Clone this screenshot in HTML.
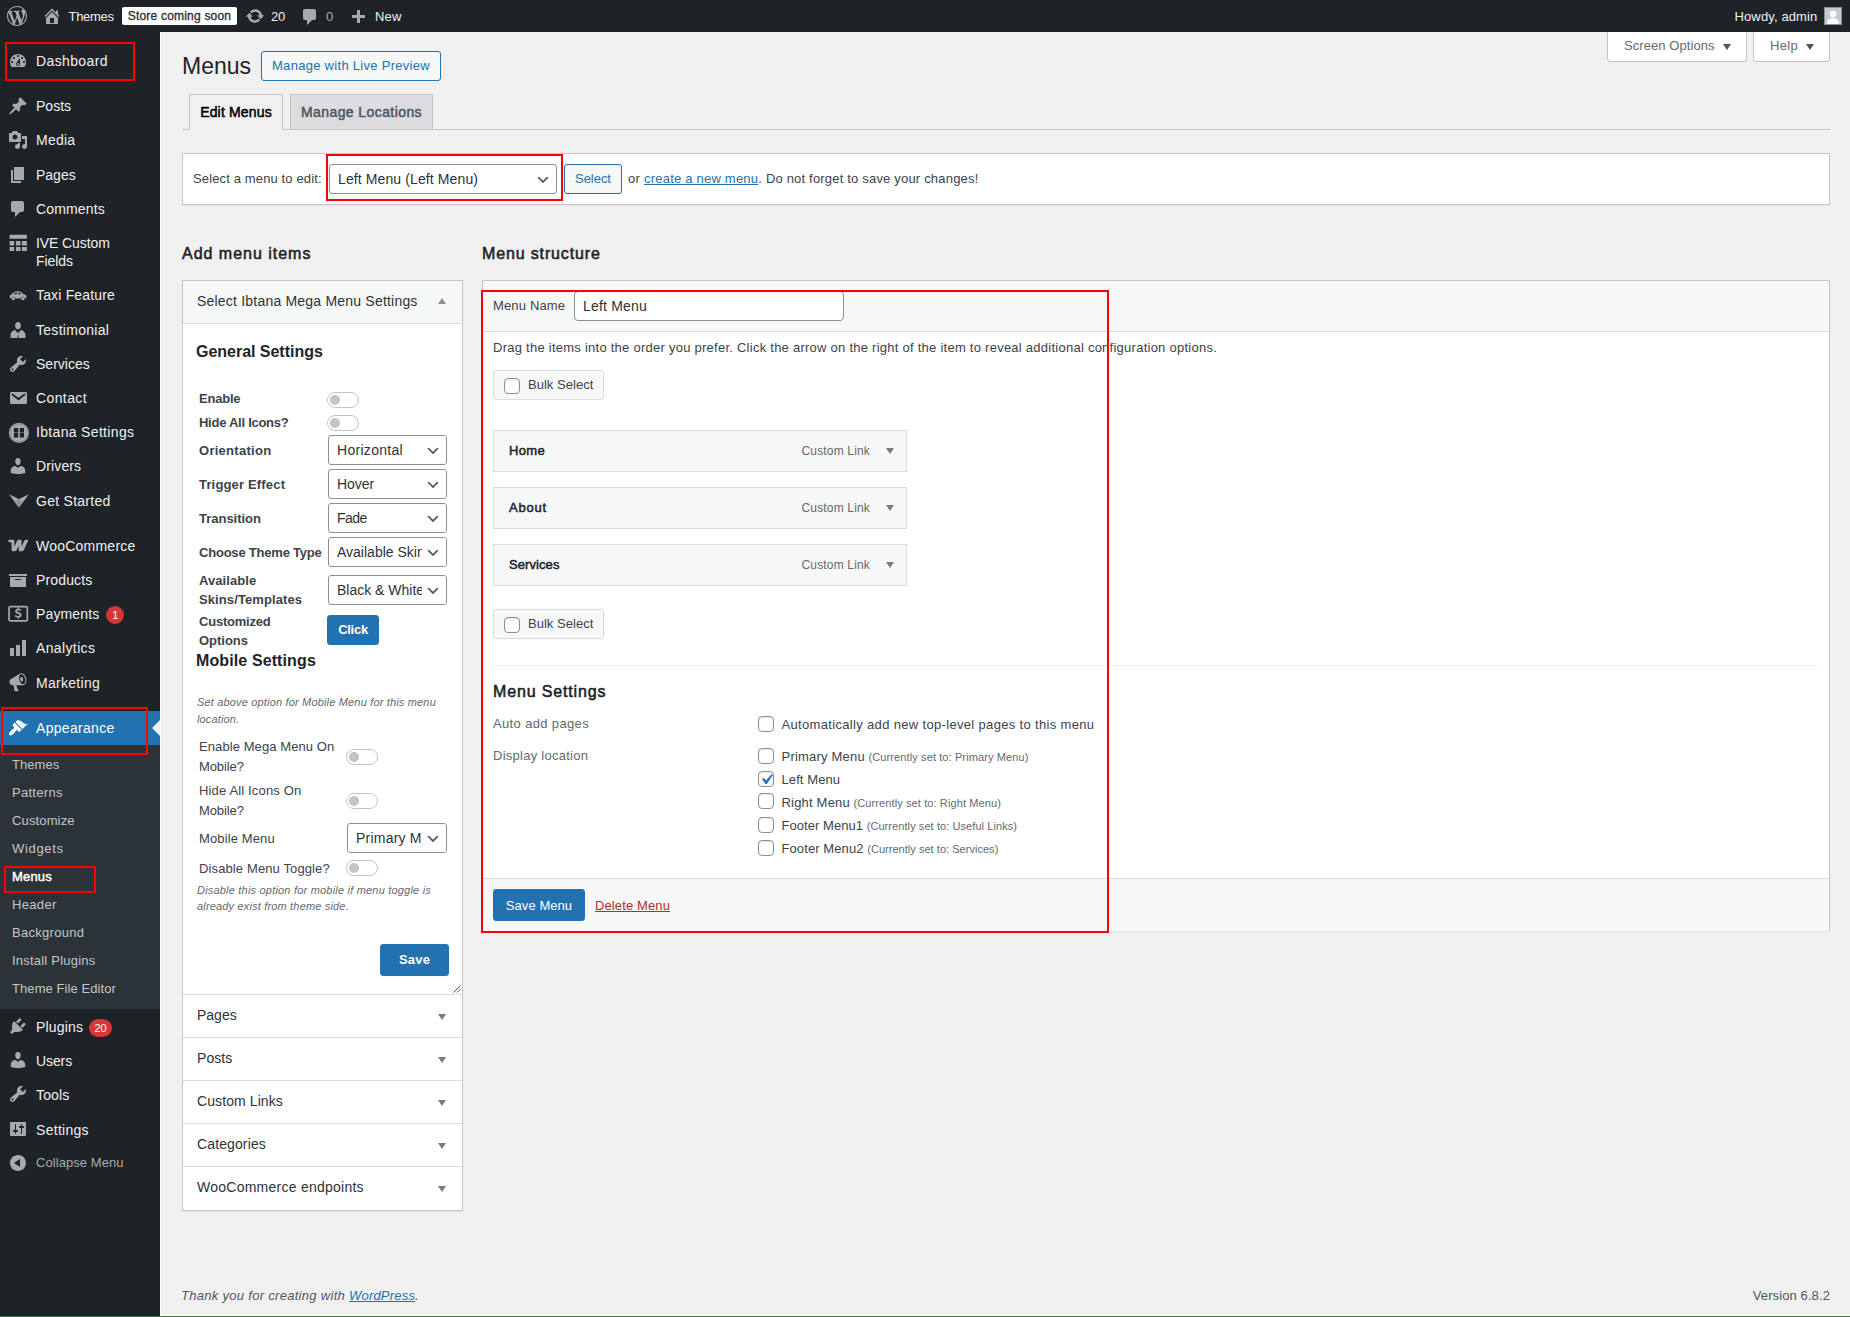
<!DOCTYPE html>
<html lang="en">
<head>
<meta charset="utf-8">
<title>Menus ‹ Themes — WordPress</title>
<style>
*{box-sizing:border-box}
html,body{margin:0;padding:0}
body{width:1850px;height:1317px;overflow:hidden;position:relative;background:#f0f0f1;font-family:"Liberation Sans",sans-serif;font-size:13px;line-height:1.4;color:#3c434a}
a{color:#2271b1;text-decoration:underline}
ul{list-style:none;margin:0;padding:0}
svg{display:block;overflow:visible}
h1,h2,h3,p{margin:0}
/* ---------- admin bar ---------- */
#wpadminbar{position:absolute;left:0;top:0;width:1850px;height:32px;background:#1d2327;color:#f0f0f1;font-size:13px;line-height:32px;z-index:10}
#wpadminbar .ab{position:absolute;top:0;height:32px;line-height:34px;white-space:nowrap}
#wpadminbar .abi{position:absolute;width:20px;height:20px}
#wpadminbar .abi svg{fill:#a7aaad}
#wpadminbar .dim{color:#a7aaad}
.soon{position:absolute;left:122px;top:7px;width:115px;height:18px;background:#fff;border-radius:2px;color:#2c3338;font-size:12px;line-height:18px;text-align:center;-webkit-text-stroke:.35px #2c3338}
.avatar{position:absolute;left:1824px;top:7px;width:18px;height:18px;border:1px solid #8c8f94;background:#c8c9cc;overflow:hidden}
.avatar svg{fill:#fff}
/* ---------- side menu ---------- */
#adminmenuback{position:absolute;left:0;top:32px;width:160px;height:1285px;background:#1d2327}
#adminmenu{position:absolute;left:0;top:44px;width:160px;color:#f0f0f1;font-size:14px;line-height:18.2px}
#adminmenu li.top{position:relative;min-height:34.2px}
#adminmenu li.top>.ic{position:absolute;left:8px;top:7px;width:20px;height:20px}
#adminmenu li.top>.ic svg{fill:#a7aaad}
#adminmenu li.top>.nm{display:block;padding:8px 8px 8px 36px}
#adminmenu li.sep{height:11px}
#adminmenu li.cur{background:#2271b1;color:#fff}
#adminmenu li.cur>.ic svg{fill:#fff}
#adminmenu li.cur:after{content:"";position:absolute;right:0;top:9px;border:8px solid transparent;border-right-color:#f0f0f1}
#adminmenu .sub{background:#2c3338;padding:6px 0;font-size:13px;line-height:18px;color:#c3c4c7}
#adminmenu .sub li{padding:5px 12px;height:28px}
#adminmenu .sub li.on{color:#fff;-webkit-text-stroke:.45px}
.badge{display:inline-block;vertical-align:top;margin:1px 0 -1px 3px;padding:0 5px;min-width:18px;height:18px;border-radius:9px;background:#d63638;color:#fff;font-size:11px;line-height:18px;text-align:center}
#collapse{color:#a7aaad;font-size:13px}
.red{position:absolute;border:2px solid #f00;z-index:20;pointer-events:none}
/* ---------- content ---------- */
.abs{position:absolute}
#screen-meta-links .btn{position:absolute;top:32px;height:30px;background:#fff;border:1px solid #c3c4c7;border-top:none;border-radius:0 0 4px 4px;color:#646970;font-size:13px;line-height:28px;padding-left:16px;white-space:nowrap}
#screen-meta-links .btn i{position:absolute;top:12px;width:0;height:0;border:4px solid transparent;border-top:6px solid #50575e;border-bottom:none}
h1.ttl{position:absolute;left:182px;top:51px;font-size:23px;font-weight:400;line-height:30px;color:#1d2327}
.pta{text-decoration:none;position:absolute;left:261px;top:51px;width:180px;height:30px;border:1px solid #2271b1;border-radius:3px;background:#f6f7f7;color:#2271b1;font-size:13px;line-height:28px;text-align:center;white-space:nowrap}
.tabs{position:absolute;left:182px;top:94px;width:1648px;height:36px;border-bottom:1px solid #c3c4c7}
.tab{position:absolute;top:0;height:35px;border:1px solid #c3c4c7;border-bottom:none;background:#dcdcde;color:#50575e;font-size:14px;-webkit-text-stroke:.5px;line-height:24px;padding:5px 0;text-align:center;white-space:nowrap}
.tab.act{background:#f0f0f1;color:#000;height:36px}
.manage{position:absolute;left:182px;top:153px;width:1648px;height:52px;background:#fff;border:1px solid #c3c4c7;box-shadow:0 1px 1px rgba(0,0,0,.04)}
.manage>span{position:absolute;top:10px;line-height:30px;white-space:nowrap;font-size:13px}
.sel{position:absolute;height:30px;border:1px solid #8c8f94;border-radius:3px;background:#fff;color:#2c3338;font-size:14px;line-height:28px;padding-left:8px;white-space:nowrap;overflow:hidden}
.sel svg{position:absolute;right:5px;top:7px;fill:#555}
.sel b{position:absolute;right:0;top:0;width:24px;height:28px;background:#fff}
.button{position:absolute;height:30px;border:1px solid #2271b1;border-radius:3px;background:#f6f7f7;color:#2271b1;font-size:13px;line-height:28px;text-align:center;white-space:nowrap}
.button.pri{background:#2271b1;color:#fff}
h2.col{position:absolute;top:241px;font-size:16px;font-weight:normal;-webkit-text-stroke:.55px;line-height:26px;color:#1d2327;white-space:nowrap}
/* left accordion */
#side{position:absolute;left:182px;top:280px;width:281px;height:931px;background:#fff;border:1px solid #c3c4c7;box-shadow:0 1px 1px rgba(0,0,0,.04)}
#side .hd{position:absolute;left:0;width:279px;height:43px;border-bottom:1px solid #dcdcde;font-size:14px;line-height:41px;padding-left:14px;color:#2c3338;white-space:nowrap}
#side .hd i{position:absolute;right:16px;top:19px;width:0;height:0;border:4px solid transparent;border-top:6px solid #787c82;border-bottom:none}
#side .hd.open{background:#f6f7f7}
#side .hd.open i{border-top:none;border-bottom:6px solid #8c8f94;top:17px}
#side h3{position:absolute;left:13px;font-size:16px;font-weight:bold;line-height:22px;color:#1d2327;white-space:nowrap}
#side .lb{position:absolute;left:16px;font-size:13px;font-weight:bold;line-height:19px;color:#3c434a;white-space:nowrap}
#side .lr{position:absolute;left:16px;font-size:13px;line-height:19.6px;color:#3c434a;white-space:nowrap}
#side .nt{position:absolute;left:14px;font-size:11px;font-style:italic;line-height:17px;color:#646970;white-space:nowrap}
.tg{position:absolute;width:32px;height:16px;border:1px solid #c3c4c7;border-radius:8px;background:#fff}
.tg:after{content:"";position:absolute;left:2px;top:2px;width:10px;height:10px;border-radius:50%;background:#c3c4c7}
/* right panel */
#mm{position:absolute;left:482px;top:280px;width:1348px;height:652px;background:#fff;border:1px solid #c3c4c7;border-bottom-color:#e5e6e7}
#mm .hdr{position:absolute;left:0;top:0;width:1346px;height:51px;background:#f6f7f7;border-bottom:1px solid #dcdcde}
#mm .ftr{position:absolute;left:0;top:597px;width:1346px;height:53px;background:#f6f7f7;border-top:1px solid #dcdcde}
#mm .t{position:absolute;white-space:nowrap}
.inp{position:absolute;height:30px;border:1px solid #8c8f94;border-radius:4px;background:#fff;color:#2c3338;font-size:14px;line-height:28px;padding-left:8px}
.bulk{position:absolute;left:10px;width:111px;height:30px;border:1px solid #dcdcde;border-radius:3px;background:#f6f7f7;font-size:13px;line-height:28px;padding-left:34px;color:#3c434a;white-space:nowrap}
.cb{position:absolute;width:16px;height:16px;border:1px solid #8c8f94;border-radius:4px;background:#fff;box-shadow:inset 0 1px 2px rgba(0,0,0,.1)}
.cb svg{position:absolute;left:-3px;top:-3px;fill:#2e74b5}
.mi{position:absolute;left:10px;width:414px;height:42px;border:1px solid #dcdcde;background:#f6f7f7}
.mi b{position:absolute;left:15px;top:0;line-height:40px;font-size:13px;font-weight:normal;-webkit-text-stroke:.5px;color:#1d2327}
.mi>span{position:absolute;right:36px;top:0;line-height:40px;font-size:12px;color:#646970}
.mi i{position:absolute;right:12px;top:17px;width:0;height:0;border:4px solid transparent;border-top:6px solid #787c82;border-bottom:none}
.sm{font-size:11px;color:#646970}
#wpfooter{position:absolute;left:180px;top:1286px;width:1650px;height:20px;color:#50575e;font-size:13px;line-height:20px}
#greenline{position:absolute;left:0;top:1316px;width:1850px;height:1px;background:#387a45;z-index:30}
#wline{position:absolute;left:160px;top:1315px;width:1690px;height:1px;background:#fbfbfb;z-index:29}
#vline{position:absolute;left:160px;top:32px;width:1px;height:1284px;background:#fafafa;z-index:5}
</style>
</head>
<body>
<div id="wpadminbar">
  <div class="abi" style="left:7px;top:6px"><svg viewBox="0 0 20 20" width="20" height="20"><path d="M20 10c0-5.51-4.49-10-10-10C4.48 0 0 4.49 0 10c0 5.52 4.48 10 10 10 5.51 0 10-4.48 10-10zM7.78 15.37L4.37 6.22c.55-.02 1.17-.08 1.17-.08.5-.06.44-1.13-.06-1.11 0 0-1.45.11-2.37.11-.18 0-.37 0-.58-.01C4.12 2.69 6.87 1.11 10 1.11c2.33 0 4.45.87 6.05 2.34-.68-.11-1.65.39-1.65 1.58 0 .74.45 1.36.9 2.1.35.61.55 1.36.55 2.46 0 1.49-1.4 5-1.4 5l-3.03-8.37c.54-.02.82-.17.82-.17.5-.05.44-1.25-.06-1.22 0 0-1.44.12-2.38.12-.87 0-2.33-.12-2.33-.12-.5-.03-.56 1.2-.06 1.22l.92.08 1.26 3.41zM17.41 10c.24-.64.74-1.87.43-4.25.7 1.29 1.05 2.71 1.05 4.25 0 3.29-1.73 6.24-4.4 7.78.97-2.59 1.94-5.2 2.92-7.78zM6.1 18.09C3.12 16.65 1.11 13.53 1.11 10c0-1.3.23-2.48.72-3.59C3.25 10.3 4.67 14.2 6.1 18.09zm4.03-6.63l2.58 6.98c-.86.29-1.76.45-2.71.45-.79 0-1.57-.11-2.29-.33.81-2.38 1.62-4.74 2.42-7.1z"/></svg></div>
  <div class="abi" style="left:42px;top:6px"><svg viewBox="0 0 20 20" width="20" height="20"><path d="M16 8.5l1.53 1.53-1.06 1.06L10 4.62l-6.47 6.47-1.06-1.06L10 2.5l4 4v-2h2v4zm-6-2.46l6 5.99V18H4v-5.97zM12 17v-5H8v5h4z"/></svg></div>
  <span class="ab" id="ab-site" style="left:68.500px"><span id="t1" style="letter-spacing:-0.313px">Themes</span></span>
  <div class="soon"><span id="t2" style="letter-spacing:0.202px">Store coming soon</span></div>
  <div class="abi" style="left:245px;top:6px"><svg viewBox="0 0 20 20" width="20" height="20"><path d="M10.2 3.28c3.53 0 6.43 2.61 6.92 6h2.08l-3.5 4-3.5-4h2.32c-.45-1.97-2.21-3.45-4.32-3.45-1.45 0-2.73.71-3.54 1.78L4.95 5.66C6.23 4.2 8.11 3.28 10.2 3.28zm-.4 13.44c-3.52 0-6.43-2.61-6.92-6H.8l3.5-4c1.17 1.33 2.33 2.67 3.5 4H5.48c.45 1.97 2.21 3.45 4.32 3.45 1.45 0 2.73-.71 3.54-1.78l1.71 1.95c-1.28 1.46-3.15 2.38-5.25 2.38z"/></svg></div>
  <span class="ab" id="ab-upd" style="left:271px"><span id="t3" style="letter-spacing:-0.262px">20</span></span>
  <div class="abi" style="left:299.500px;top:7px"><svg viewBox="0 0 20 20" width="20" height="20"><path d="M5 2h9c1.1 0 2 .9 2 2v7c0 1.1-.9 2-2 2h-2l-5 5v-5H5c-1.1 0-2-.9-2-2V4c0-1.1.9-2 2-2z"/></svg></div>
  <span class="ab dim" id="ab-com" style="left:326px">0</span>
  <div class="abi" style="left:348px;top:8px"><svg viewBox="0 0 20 20" width="20" height="20"><path d="M17 7v3h-5v5H9v-5H4V7h5V2h3v5h5z"/></svg></div>
  <span class="ab" id="ab-new" style="left:375px"><span id="t4" style="letter-spacing:0.194px">New</span></span>
  <span class="ab" id="ab-howdy" style="left:1734.500px"><span id="t5" style="letter-spacing:0.126px">Howdy, admin</span></span>
  <div class="avatar"><svg viewBox="0 0 16 16" width="16" height="16"><circle cx="8" cy="6" r="3.2"/><path d="M2 16c0-4 2.500-6 6-6s6 2 6 6z"/></svg></div>
</div>
<div id="adminmenuback"></div>
<ul id="adminmenu">
<li class="top"><span class="ic i-dashboard"><svg viewBox="0 0 20 20" width="20" height="20"><path d="M3.76 16h12.48c1.1-1.37 1.76-3.11 1.76-5 0-4.42-3.58-8-8-8s-8 3.58-8 8c0 1.89.66 3.63 1.76 5zM10 4c.55 0 1 .45 1 1s-.45 1-1 1-1-.45-1-1 .45-1 1-1zM6 6c.55 0 1 .45 1 1s-.45 1-1 1-1-.45-1-1 .45-1 1-1zm8 0c.55 0 1 .45 1 1s-.45 1-1 1-1-.45-1-1 .45-1 1-1zm-5.37 5.55L12 7v6c0 1.1-.9 2-2 2s-2-.9-2-2c0-.57.24-1.08.63-1.45zM4 10c.55 0 1 .45 1 1s-.45 1-1 1-1-.45-1-1 .45-1 1-1zm12 0c.55 0 1 .45 1 1s-.45 1-1 1-1-.45-1-1 .45-1 1-1zm-5 3c0-.55-.45-1-1-1s-1 .45-1 1 .45 1 1 1 1-.45 1-1z"/></svg></span><span class="nm"><span id="t6" style="letter-spacing:0.375px">Dashboard</span></span></li>
<li class="sep"></li>
<li class="top"><span class="ic i-pin"><svg viewBox="0 0 20 20" width="20" height="20"><path d="M10.44 3.02l1.82-1.82 6.36 6.35-1.83 1.82c-1.05-.68-2.48-.57-3.41.36l-.75.75c-.92.93-1.04 2.35-.35 3.41l-1.83 1.82-2.41-2.41-2.8 2.79c-.42.42-3.38 2.71-3.8 2.29s1.86-3.39 2.28-3.81l2.79-2.79L4.1 9.36l1.83-1.82c1.05.69 2.48.57 3.4-.36l.75-.75c.93-.92 1.05-2.35.36-3.41z"/></svg></span><span class="nm"><span id="t7" style="letter-spacing:0.019px">Posts</span></span></li>
<li class="top"><span class="ic i-media"><svg viewBox="0 0 20 20" width="20" height="20"><path d="M13 11V4c0-.55-.45-1-1-1h-1.67L9 1H5L3.67 3H2c-.55 0-1 .45-1 1v7c0 .55.45 1 1 1h10c.55 0 1-.45 1-1zM7 4.5c1.38 0 2.5 1.12 2.5 2.5S8.38 9.500 7 9.500 4.500 8.380 4.500 7 5.620 4.500 7 4.500zM14 6h5v10.500c0 1.380-1.120 2.500-2.500 2.500S14 17.880 14 16.500s1.120-2.500 2.500-2.500c.170 0 .340.020.500.050V9h-3V6zm-4 8.050V13h2v3.500c0 1.380-1.120 2.500-2.500 2.500S7 17.880 7 16.500 8.120 14 9.500 14c.170 0 .340.020.500.050z"/></svg></span><span class="nm"><span id="t8" style="letter-spacing:0.242px">Media</span></span></li>
<li class="top"><span class="ic i-page"><svg viewBox="0 0 20 20" width="20" height="20"><path d="M6 15V2h10v13H6zm-1 1h8v2H3V5h2v11z"/></svg></span><span class="nm"><span id="t9" style="letter-spacing:-0.002px">Pages</span></span></li>
<li class="top"><span class="ic i-comments"><svg viewBox="0 0 20 20" width="20" height="20"><path d="M5 2h9c1.1 0 2 .9 2 2v7c0 1.1-.9 2-2 2h-2l-5 5v-5H5c-1.1 0-2-.9-2-2V4c0-1.1.9-2 2-2z"/></svg></span><span class="nm"><span id="t10" style="letter-spacing:0.158px">Comments</span></span></li>
<li class="top"><span class="ic i-table"><svg viewBox="0 0 20 20" width="20" height="20"><g transform="translate(0,-1)"><path d="M1.600 2.800h17.300v3.900H1.600zM1.600 8.900h4.500v4.600H1.600zM7.900 8.900h4.600v4.600H7.900zM13.900 8.900h5v4.600h-5zM1.600 14.900h4.500v4.100H1.600zM7.900 14.900h4.600v4.100H7.900zM13.900 14.900h5v4.100h-5z"/></g></svg></span><span class="nm"><span id="t11" style="letter-spacing:-0.089px">IVE Custom</span><br><span id="t12" style="letter-spacing:-0.091px">Fields</span></span></li>
<li class="top"><span class="ic i-car"><svg viewBox="0 0 20 20" width="20" height="20"><g transform="translate(0,1.300) scale(1,.88)"><path d="M3.600 9.400C4.600 7.000 6.700 5.600 9.600 5.600c2.700 0 4.600 1.200 5.800 3.300 1.900.3 3.000 1.300 3.000 2.800v1.500c0 .4-.3.700-.7.700h-.5a2.400 2.400 0 0 0-4.700 0H7.700a2.400 2.400 0 0 0-4.700 0h-.500c-.400 0-.700-.300-.700-.700v-2.100c0-.900.700-1.500 1.800-1.700zm2.000-.300h3.300V7.000C7.500 7.100 6.300 7.800 5.600 9.100zm4.500 0h3.500c-.7-1.200-1.900-2.000-3.500-2.100zM5.350 12.400a1.700 1.700 0 1 0 0 3.400 1.700 1.700 0 0 0 0-3.400zm9.500 0a1.700 1.700 0 1 0 0 3.400 1.700 1.700 0 0 0 0-3.400z"/></g></svg></span><span class="nm"><span id="t13" style="letter-spacing:0.169px">Taxi Feature</span></span></li>
<li class="top"><span class="ic i-person"><svg viewBox="0 0 20 20" width="20" height="20"><g transform="translate(0,-1.400)"><path d="M10 3.400c1.700 0 2.900 1.500 2.900 3.500S11.700 10.700 10 10.700 7.100 8.900 7.100 6.900 8.300 3.400 10 3.400zM7.200 11.500l2.300 2.900.5-1.500.5 1.500 2.300-2.900c2.700.4 4.700 2.400 4.700 5.000v2.900H10.600l-.6-4.000-.6 4.000H2.500v-2.900c0-2.600 2.000-4.600 4.700-5.000z"/></g></svg></span><span class="nm"><span id="t14" style="letter-spacing:0.287px">Testimonial</span></span></li>
<li class="top"><span class="ic i-tools"><svg viewBox="0 0 20 20" width="20" height="20"><path d="M16.680 9.770c-1.340 1.340-3.300 1.670-4.950.990l-5.410 6.520c-.990.990-2.590.990-3.580 0s-.990-2.590 0-3.570l6.520-5.420c-.680-1.650-.350-3.610.990-4.950 1.280-1.280 3.120-1.620 4.720-1.060l-2.890 2.890 2.820 2.820 2.860-2.870c.530 1.580.180 3.390-1.080 4.650zM3.810 16.210c.400.390 1.040.390 1.430 0 .400-.400.400-1.040 0-1.430-.390-.400-1.030-.400-1.430 0-.390.390-.390 1.030 0 1.430z"/></svg></span><span class="nm"><span id="t15" style="letter-spacing:0.016px">Services</span></span></li>
<li class="top"><span class="ic i-email"><svg viewBox="0 0 20 20" width="20" height="20"><path d="M3.870 4h13.250C18.370 4 19 4.590 19 5.790v8.420c0 1.190-.630 1.790-1.880 1.790H3.870c-1.250 0-1.880-.600-1.880-1.790V5.790c0-1.200.630-1.790 1.880-1.790zm6.620 8.600l6.740-5.530c.240-.200.430-.660.130-1.070-.290-.410-.820-.420-1.170-.170l-5.700 3.860L4.800 5.830c-.350-.250-.880-.240-1.170.170-.300.410-.110.870.130 1.070z"/></svg></span><span class="nm"><span id="t16" style="letter-spacing:0.391px">Contact</span></span></li>
<li class="top"><span class="ic i-ibtana"><svg viewBox="0 0 22 20" width="22" height="20"><circle cx="10.950" cy="10.800" r="10.100"/><circle cx="10.950" cy="10.800" r="8.900" fill="none" stroke="#1d2327" stroke-width=".5" opacity=".45"/><path d="M5.900 6.100h4.300v4.400H5.900zM11.800 6.100h4.200v4.400h-4.200zM5.900 11.100h4.300v4.400H5.900zM11.800 11.100h4.200v4.400h-4.200z" fill="#1d2327"/></svg></span><span class="nm"><span id="t17" style="letter-spacing:0.328px">Ibtana Settings</span></span></li>
<li class="top"><span class="ic i-users"><svg viewBox="0 0 20 20" width="20" height="20"><path d="M10 9.250c-2.270 0-2.730-3.440-2.730-3.440C7 4.020 7.820 2 9.970 2c2.160 0 2.980 2.020 2.710 3.810 0 0-.410 3.440-2.680 3.440zm0 2.570L12.720 10c2.390 0 4.520 2.330 4.520 4.530v2.490s-3.650 1.130-7.240 1.130c-3.650 0-7.240-1.130-7.240-1.130v-2.490c0-2.250 1.940-4.480 4.470-4.480z"/></svg></span><span class="nm"><span id="t18" style="letter-spacing:0.127px">Drivers</span></span></li>
<li class="top"><span class="ic i-vee"><svg viewBox="0 0 22 20" width="22" height="20"><path d="M1.100 3.300L10.800 7.900 21 3.300 10.800 16.700z"/><path d="M10.800 7.900L8.200 11.400 10.800 16.700 13.400 11.400z" fill="#1d2327" opacity=".16"/><path d="M10.800 7.900v8.800M10.800 7.900L7 11M10.800 7.900l3.800 3.100" stroke="#1d2327" stroke-width=".4" opacity=".3" fill="none"/></svg></span><span class="nm"><span id="t19" style="letter-spacing:0.27px">Get Started</span></span></li>
<li class="sep"></li>
<li class="top"><span class="ic i-woo"><svg viewBox="0 0 20 20" width="20" height="20"><path d="M0.200 4.900c0-.7.500-1.200 1.200-1.200h3.300c1.100 0 1.700.5 1.700 1.500v5.500l2.700-6.000c.3-.7.800-1.000 1.500-1.000h1.600c.9 0 1.400.5 1.400 1.400v5.600l2.700-6.100c.3-.6.800-.9 1.400-.9h1.500c.9 0 1.200.6.800 1.400l-4.200 8.900c-.4.800-1.000 1.200-1.900 1.200h-1.700c-1.000 0-1.500-.5-1.500-1.500V9.800l-2.000 4.200c-.4.800-1.000 1.200-1.900 1.200H5.100c-1.000 0-1.500-.5-1.500-1.500V7.300c0-.7-.3-1.000-1.000-1.000H1.400c-.7 0-1.200-.5-1.200-1.200z"/></svg></span><span class="nm"><span id="t20" style="letter-spacing:0.23px">WooCommerce</span></span></li>
<li class="top"><span class="ic i-archive"><svg viewBox="0 0 20 20" width="20" height="20"><path d="M19 4v2H1V4h18zM2 7h16v10H2V7zm11 3V9H7v1h6z"/></svg></span><span class="nm"><span id="t21" style="letter-spacing:0.15px">Products</span></span></li>
<li class="top"><span class="ic i-pay"><svg viewBox="0 0 20 20" width="20" height="20"><path fill-rule="evenodd" d="M2.300 1.700h15.800c1.200 0 2.100.9 2.100 2.100v11.800c0 1.200-.9 2.100-2.100 2.100H2.300c-1.200 0-2.100-.9-2.100-2.100V3.800c0-1.200.9-2.100 2.100-2.100zm-.4 1.700v12.600h16.600V3.400H1.900z"/><g transform="translate(-1.600,-1.700) scale(1.150)"><path d="M9.700 4.600h1.200v1.000c.9.100 1.600.4 2.100.8l-.8 1.200c-.5-.4-1.200-.6-1.800-.6-.7 0-1.000.3-1.000.7 0 .4.300.6 1.400.9 1.600.4 2.500 1.000 2.500 2.400 0 1.200-.8 2.100-2.400 2.300v1.100H9.700v-1.100c-1.000-.1-1.900-.5-2.500-1.100l.9-1.200c.6.600 1.400.9 2.200.9.800 0 1.200-.3 1.200-.8 0-.4-.3-.7-1.400-.9-1.600-.4-2.500-1.000-2.500-2.400 0-1.100.8-2.000 2.100-2.200V4.600z"/></g></svg></span><span class="nm"><span id="t22" style="letter-spacing:0.135px">Payments</span> <span class="badge">1</span></span></li>
<li class="top"><span class="ic i-chart"><svg viewBox="0 0 20 20" width="20" height="20"><path d="M18 18V2h-4v16h4zm-6 0V7H8v11h4zm-6 0v-8H2v8h4z"/></svg></span><span class="nm"><span id="t23" style="letter-spacing:0.37px">Analytics</span></span></li>
<li class="top"><span class="ic i-megaphone"><svg viewBox="0 0 20 20" width="20" height="20"><g transform="translate(0,-.8)"><path d="M18.150 5.940c.460 1.620.380 3.220-.020 4.480-.420 1.280-1.260 2.180-2.300 2.480-.160.060-.260.060-.400.060-.060.020-.120.020-.180.020-.060.020-.140.020-.220.020h-6.800l2.220 5.500c.020.140-.060.260-.140.340-.080.100-.240.160-.340.160H6.950c-.100 0-.260-.060-.340-.160-.080-.080-.160-.200-.140-.340l-1-5.500H4.250l-.020-.020c-.500.060-1.080-.180-1.540-.620s-.880-1.080-1.060-1.880c-.240-.800-.200-1.560-.020-2.200.180-.620.580-1.080 1.060-1.300l.020-.020 9-5.400c.100-.060.180-.100.240-.160.060-.040.140-.080.240-.120.160-.080.280-.120.500-.180 1.040-.300 2.240.100 3.220.980s1.840 2.240 2.260 3.860zm-2.580 5.980h-.020c.400-.100.740-.340 1.040-.700.580-.700.860-1.760.860-3.040 0-.640-.100-1.300-.280-1.980-.340-1.360-1.020-2.500-1.780-3.240s-1.680-1.100-2.460-.880c-.820.220-1.400.960-1.700 2-.320 1.040-.280 2.360.060 3.720.380 1.360 1 2.500 1.800 3.240.780.740 1.620 1.100 2.480.880zm-2.540-7.080c.220-.040.420-.020.620.040.380.160.760.480 1.020 1s.420 1.200.420 1.780c0 .300-.040.560-.120.800-.180.480-.440.840-.860.940-.340.100-.800-.060-1.140-.400s-.640-.860-.780-1.500c-.180-.620-.120-1.240.020-1.720s.480-.840.820-.940z"/></g></svg></span><span class="nm"><span id="t24" style="letter-spacing:0.291px">Marketing</span></span></li>
<li class="sep"></li>
<li class="top cur"><span class="ic i-appearance"><svg viewBox="0 0 20 20" width="20" height="20"><path d="M14.480 11.060L7.410 3.990l1.500-1.500c.5-.56 2.300-.47 3.510.32 1.210.8 1.430 1.280 2.910 2.100 1.180.64 2.450 1.260 4.450.85zm-.71.71L6.700 4.700 4.930 6.470c-.39.39-.39 1.020 0 1.410l1.060 1.060c.39.39.39 1.030 0 1.420-.6.600-1.430 1.110-2.210 1.690-.35.260-.7.530-1.010.84C1.430 14.230.4 16.080 1.400 17.070c.99 1 2.840-.03 4.180-1.360.31-.31.580-.66.850-1.020.57-.78 1.080-1.610 1.690-2.210.39-.39 1.020-.39 1.410 0l1.060 1.060c.39.39 1.020.39 1.410 0z"/></svg></span><span class="nm"><span id="t25" style="letter-spacing:0.311px">Appearance</span></span></li>
<li class="subw"><ul class="sub"><li><span id="t26" style="letter-spacing:0.065px">Themes</span></li><li><span id="t27" style="letter-spacing:0.282px">Patterns</span></li><li><span id="t28" style="letter-spacing:0.136px">Customize</span></li><li><span id="t29" style="letter-spacing:0.672px">Widgets</span></li><li class="on"><span id="t30" style="letter-spacing:0.194px">Menus</span></li><li><span id="t31" style="letter-spacing:0.331px">Header</span></li><li><span id="t32" style="letter-spacing:0.28px">Background</span></li><li><span id="t33" style="letter-spacing:0.213px">Install Plugins</span></li><li><span id="t34" style="letter-spacing:0.075px">Theme File Editor</span></li></ul></li>
<li class="top"><span class="ic i-plugins"><svg viewBox="0 0 20 20" width="20" height="20"><path d="M13.110 4.360L9.870 7.600 8 5.730l3.240-3.240c.35-.34 1.050-.2 1.560.32.520.51.660 1.210.31 1.550zm-8 1.770l.91-1.120 9.010 9.010-1.190.84c-.71.710-2.630 1.160-3.820 1.160H6.140L4.900 17.260c-.59.590-1.540.59-2.120 0-.59-.58-.59-1.530 0-2.120l1.240-1.240v-3.880c0-1.130.4-3.190 1.090-3.890zm7.260 3.970l3.240-3.240c.34-.35 1.040-.21 1.550.31.520.51.660 1.210.31 1.550l-3.240 3.250z"/></svg></span><span class="nm" style="padding-top:9px;padding-bottom:7px"><span id="t35" style="letter-spacing:0.163px">Plugins</span> <span class="badge" style="margin-left:2px;padding:0 5.500px">20</span></span></li>
<li class="top"><span class="ic i-users"><svg viewBox="0 0 20 20" width="20" height="20"><path d="M10 9.250c-2.270 0-2.730-3.440-2.730-3.440C7 4.020 7.820 2 9.970 2c2.160 0 2.980 2.020 2.710 3.810 0 0-.410 3.440-2.680 3.440zm0 2.570L12.720 10c2.390 0 4.520 2.330 4.520 4.530v2.490s-3.650 1.130-7.240 1.130c-3.650 0-7.240-1.130-7.240-1.130v-2.490c0-2.250 1.940-4.480 4.470-4.480z"/></svg></span><span class="nm" style="padding-top:9px;padding-bottom:7px"><span id="t36" style="letter-spacing:-0.091px">Users</span></span></li>
<li class="top"><span class="ic i-tools"><svg viewBox="0 0 20 20" width="20" height="20"><path d="M16.680 9.770c-1.340 1.340-3.300 1.670-4.950.990l-5.410 6.520c-.990.990-2.590.990-3.580 0s-.990-2.590 0-3.570l6.520-5.420c-.680-1.650-.350-3.610.990-4.950 1.280-1.280 3.120-1.620 4.720-1.060l-2.890 2.890 2.820 2.820 2.860-2.870c.530 1.580.180 3.390-1.080 4.650zM3.810 16.210c.400.390 1.040.390 1.430 0 .400-.400.400-1.040 0-1.430-.390-.400-1.030-.400-1.430 0-.390.390-.390 1.030 0 1.430z"/></svg></span><span class="nm" style="padding-top:9px;padding-bottom:7px"><span id="t37" style="letter-spacing:0.128px">Tools</span></span></li>
<li class="top"><span class="ic i-settings"><svg viewBox="0 0 20 20" width="20" height="20"><path d="M18 16V4c0-.55-.45-1-1-1H3c-.55 0-1 .45-1 1v12c0 .55.45 1 1 1h14c.55 0 1-.45 1-1zM8 11h1c.55 0 1 .45 1 1s-.45 1-1 1H8v1.500c0 .280-.220.500-.500.500s-.500-.220-.500-.500V13H6c-.55 0-1-.45-1-1s.45-1 1-1h1V5.500c0-.280.220-.500.500-.500s.500.220.500.500V11zm5-2h-1c-.55 0-1-.45-1-1s.45-1 1-1h1V5.500c0-.280.220-.500.500-.500s.500.220.500.500V7h1c.55 0 1 .45 1 1s-.45 1-1 1h-1v5.500c0 .280-.220.500-.500.500s-.500-.220-.500-.500V9z"/></svg></span><span class="nm" style="padding-top:9px;padding-bottom:7px"><span id="t38" style="letter-spacing:0.288px">Settings</span></span></li>
<li class="top" id="collapse"><span class="ic"><svg viewBox="0 0 20 20" width="20" height="20"><path d="M10 2.020c-4.420 0-8 3.580-8 8s3.580 8 8 8 8-3.580 8-8-3.580-8-8-8zM12 14l-6-4 6-4v8z"/></svg></span><span class="nm"><span id="t39" style="letter-spacing:0.065px">Collapse Menu</span></span></li>
</ul>
<div id="wpcontent">
  <div id="screen-meta-links">
    <div class="btn" style="left:1607px;width:140px"><span id="t40" style="letter-spacing:0.068px">Screen Options</span><i style="left:115px"></i></div>
    <div class="btn" style="left:1753px;width:77px"><span id="t41" style="letter-spacing:0.353px">Help</span><i style="left:52px"></i></div>
  </div>
  <h1 class="ttl"><span id="t42" style="letter-spacing:-0.01px">Menus</span></h1>
  <a class="pta"><span id="t43" style="letter-spacing:0.29px">Manage with Live Preview</span></a>
  <div class="tabs">
    <div class="tab act" style="left:7px;width:94px"><span id="t44" style="letter-spacing:0.163px">Edit Menus</span></div>
    <div class="tab" style="left:108px;width:143px"><span id="t45" style="letter-spacing:0.412px">Manage Locations</span></div>
  </div>
  <div class="manage">
    <span style="left:10px"><span id="t46" style="letter-spacing:0.136px">Select a menu to edit:</span></span>
    <div class="sel" style="left:146px;top:10px;width:228px"><span id="t47" style="letter-spacing:0.112px">Left Menu (Left Menu)</span><svg viewBox="0 0 20 20" width="16" height="16"><path d="M5 6l5 5 5-5 2 1-7 7-7-7 2-1z"/></svg></div>
    <div class="button" style="left:381px;top:10px;width:58px"><span id="t48" style="letter-spacing:-0.047px">Select</span></div>
    <span style="left:445px"><span id="t49" style="letter-spacing:0.262px">or </span><a><span id="t50" style="letter-spacing:0.22px">create a new menu</span></a><span id="t51" style="letter-spacing:0.189px">. Do not forget to save your changes!</span></span>
  </div>
  <h2 class="col" style="left:182px"><span id="t52" style="letter-spacing:0.983px">Add menu items</span></h2>
  <h2 class="col" style="left:482px"><span id="t53" style="letter-spacing:0.853px">Menu structure</span></h2>

  <div id="side">
    <div class="hd open" style="top:0"><span id="t54" style="letter-spacing:0.205px">Select Ibtana Mega Menu Settings</span><i></i></div>
    <h3 style="top:60px"><span id="t55" style="letter-spacing:-0.023px">General Settings</span></h3>
    <div class="lb" style="top:108px"><span id="t56" style="letter-spacing:-0.207px">Enable</span></div><div class="tg" style="left:144px;top:111px"></div>
    <div class="lb" style="top:132px"><span id="t57" style="letter-spacing:-0.266px">Hide All Icons?</span></div><div class="tg" style="left:144px;top:134px"></div>
    <div class="lb" style="top:160px"><span id="t58" style="letter-spacing:0.276px">Orientation</span></div><div class="sel u" style="left:145px;top:154px;width:119px"><span id="t59" style="letter-spacing:0.297px">Horizontal</span><b></b><svg viewBox="0 0 20 20" width="16" height="16"><path d="M5 6l5 5 5-5 2 1-7 7-7-7 2-1z"/></svg></div>
    <div class="lb" style="top:194px"><span id="t60" style="letter-spacing:0.169px">Trigger Effect</span></div><div class="sel u" style="left:145px;top:188px;width:119px"><span id="t61" style="letter-spacing:-0.038px">Hover</span><b></b><svg viewBox="0 0 20 20" width="16" height="16"><path d="M5 6l5 5 5-5 2 1-7 7-7-7 2-1z"/></svg></div>
    <div class="lb" style="top:228px"><span id="t62" style="letter-spacing:-0.014px">Transition</span></div><div class="sel u" style="left:145px;top:222px;width:119px"><span id="t63" style="letter-spacing:-0.539px">Fade</span><b></b><svg viewBox="0 0 20 20" width="16" height="16"><path d="M5 6l5 5 5-5 2 1-7 7-7-7 2-1z"/></svg></div>
    <div class="lb" style="top:262px"><span id="t64" style="letter-spacing:-0.211px">Choose Theme Type</span></div><div class="sel u" style="left:145px;top:256px;width:119px">Available Skins<b></b><svg viewBox="0 0 20 20" width="16" height="16"><path d="M5 6l5 5 5-5 2 1-7 7-7-7 2-1z"/></svg></div>
    <div class="lb" style="top:290px"><span id="t65" style="letter-spacing:0.085px">Available</span><br><span id="t66" style="letter-spacing:0.104px">Skins/Templates</span></div><div class="sel u" style="left:145px;top:294px;width:119px">Black &amp; White<b></b><svg viewBox="0 0 20 20" width="16" height="16"><path d="M5 6l5 5 5-5 2 1-7 7-7-7 2-1z"/></svg></div>
    <div class="lb" style="top:331px"><span id="t67" style="letter-spacing:-0.219px">Customized</span><br><span id="t68" style="letter-spacing:-0.018px">Options</span></div><div class="button pri" style="left:144px;top:334px;width:52px;font-weight:bold"><span id="t69" style="letter-spacing:-0.271px">Click</span></div>
    <h3 style="top:369px"><span id="t70" style="letter-spacing:0.111px">Mobile Settings</span></h3>
    <div class="nt" style="top:413px"><span id="t71" style="letter-spacing:0.17px">Set above option for Mobile Menu for this menu</span><br><span id="t72" style="letter-spacing:0.153px">location.</span></div>
    <div class="lr" style="top:456px"><span id="t73" style="letter-spacing:0.083px">Enable Mega Menu On</span><br><span id="t74" style="letter-spacing:-0.105px">Mobile?</span></div><div class="tg" style="left:163px;top:468px"></div>
    <div class="lr" style="top:500px"><span id="t75" style="letter-spacing:0.155px">Hide All Icons On</span><br><span id="t76" style="letter-spacing:-0.105px">Mobile?</span></div><div class="tg" style="left:163px;top:512px"></div>
    <div class="lr" style="top:548px"><span id="t77" style="letter-spacing:0.127px">Mobile Menu</span></div><div class="sel" style="left:164px;top:542px;width:100px"><span id="t78" style="letter-spacing:0.215px">Primary M</span>enu<b></b><svg viewBox="0 0 20 20" width="16" height="16"><path d="M5 6l5 5 5-5 2 1-7 7-7-7 2-1z"/></svg></div>
    <div class="lr" style="top:578px"><span id="t79" style="letter-spacing:0.121px">Disable Menu Toggle?</span></div><div class="tg" style="left:163px;top:579px"></div>
    <div class="nt" style="top:601px;line-height:16px"><span id="t80" style="letter-spacing:0.2px">Disable this option for mobile if menu toggle is</span><br><span id="t81" style="letter-spacing:0.171px">already exist from theme side.</span></div>
    <div class="button pri" style="left:197px;top:663px;width:69px;height:32px;line-height:30px;font-size:13px;font-weight:bold"><span id="t82" style="letter-spacing:0.21px">Save</span></div>
    <svg class="abs" style="left:270px;top:704px" width="8" height="8" viewBox="0 0 8 8"><path d="M7.500 .5L.5 7.500M7.500 4L4 7.500" stroke="#50575e" stroke-width="1" fill="none"/></svg>
    <div class="hd" style="top:713px;border-top:1px solid #dcdcde;height:44px"><span id="t83" style="letter-spacing:-0.002px">Pages</span><i></i></div>
    <div class="hd" style="top:757px"><span id="t84" style="letter-spacing:0.069px">Posts</span><i></i></div>
    <div class="hd" style="top:800px"><span id="t85" style="letter-spacing:0.09px">Custom Links</span><i></i></div>
    <div class="hd" style="top:843px"><span id="t86" style="letter-spacing:0.12px">Categories</span><i></i></div>
    <div class="hd" style="top:886px;border-bottom:none"><span id="t87" style="letter-spacing:0.25px">WooCommerce endpoints</span><i></i></div>
  </div>

  <div id="mm">
    <div class="hdr">
      <span class="t" style="left:10px;top:10px;line-height:30px"><span id="t88" style="letter-spacing:0.149px">Menu Name</span></span>
      <div class="inp" style="left:91px;top:10px;width:270px"><span id="t89" style="letter-spacing:0.179px">Left Menu</span></div>
    </div>
    <div class="t" style="left:10px;top:57px;line-height:20px"><span id="t90" style="letter-spacing:0.252px">Drag the items into the order you prefer. Click the arrow on the right of the item to reveal additional configuration options.</span></div>
    <div class="bulk" style="top:89px"><span class="cb" style="left:10px;top:7px"></span><span id="t91" style="letter-spacing:0.026px">Bulk Select</span></div>
    <div class="mi" style="top:149px"><b><span id="t92" style="letter-spacing:0.373px">Home</span></b><span><span id="t93" style="letter-spacing:0.161px">Custom Link</span></span><i></i></div>
    <div class="mi" style="top:206px"><b><span id="t94" style="letter-spacing:0.779px">About</span></b><span><span id="t95" style="letter-spacing:0.161px">Custom Link</span></span><i></i></div>
    <div class="mi" style="top:263px"><b><span id="t96" style="letter-spacing:0.077px">Services</span></b><span><span id="t97" style="letter-spacing:0.161px">Custom Link</span></span><i></i></div>
    <div class="bulk" style="top:328px"><span class="cb" style="left:10px;top:7px"></span><span id="t98" style="letter-spacing:0.026px">Bulk Select</span></div>
    <div class="abs" style="left:10px;top:384px;width:1326px;height:1px;background:#f0f0f1"></div>
    <h3 class="t" style="left:10px;top:399px;font-size:16px;font-weight:normal;-webkit-text-stroke:.55px;line-height:24px;color:#1d2327"><span id="t99" style="letter-spacing:0.842px">Menu Settings</span></h3>
    <div class="t" style="left:10px;top:433px;line-height:20px;color:#646970"><span id="t100" style="letter-spacing:0.355px">Auto add pages</span></div>
    <span class="cb" style="left:275px;top:435px"></span><div class="t" style="left:298.500px;top:434px;line-height:20px"><span id="t101" style="letter-spacing:0.331px">Automatically add new top-level pages to this menu</span></div>
    <div class="t" style="left:10px;top:465px;line-height:20px;color:#646970"><span id="t102" style="letter-spacing:0.257px">Display location</span></div>
    <span class="cb" style="left:275px;top:467px"></span><div class="t" style="left:298.500px;top:466px;line-height:20px"><span id="t103" style="letter-spacing:0.207px">Primary Menu</span> <span class="sm"><span id="t104" style="letter-spacing:0.107px">(Currently set to: Primary Menu)</span></span></div>
    <span class="cb" style="left:275px;top:490px"><svg viewBox="0 0 20 20" width="21" height="21"><path d="M14.830 4.890l1.340.940-5.810 8.380H9.020L5.780 9.670l1.340-1.250 2.570 2.400z"/></svg></span><div class="t" style="left:298.500px;top:489px;line-height:20px"><span id="t105" style="letter-spacing:0.097px">Left Menu</span></div>
    <span class="cb" style="left:275px;top:512px"></span><div class="t" style="left:298.500px;top:512px;line-height:20px"><span id="t106" style="letter-spacing:0.191px">Right Menu</span> <span class="sm"><span id="t107" style="letter-spacing:0.104px">(Currently set to: Right Menu)</span></span></div>
    <span class="cb" style="left:275px;top:536px"></span><div class="t" style="left:298.500px;top:535px;line-height:20px"><span id="t108" style="letter-spacing:0.051px">Footer Menu1</span> <span class="sm"><span id="t109" style="letter-spacing:0.076px">(Currently set to: Useful Links)</span></span></div>
    <span class="cb" style="left:275px;top:559px"></span><div class="t" style="left:298.500px;top:558px;line-height:20px"><span id="t110" style="letter-spacing:0.096px">Footer Menu2</span> <span class="sm"><span id="t111" style="letter-spacing:0.033px">(Currently set to: Services)</span></span></div>
    <div class="ftr">
      <div class="button pri" style="left:10px;top:10px;width:92px;height:32px;line-height:32px"><span id="t112" style="letter-spacing:0.055px">Save Menu</span></div>
      <a class="t" style="left:112px;top:11px;line-height:32px;color:#b32d2e;text-decoration:underline"><span id="t113" style="letter-spacing:0.118px">Delete Menu</span></a>
    </div>
  </div>

  <div id="wpfooter">
    <span class="abs" style="left:1px;top:0;font-style:italic;white-space:nowrap"><span id="t114" style="letter-spacing:0.296px">Thank you for creating with </span><a><span id="t115" style="letter-spacing:0.201px">WordPress</span></a>.</span>
    <span class="abs" style="right:0;top:0;white-space:nowrap"><span id="t116" style="letter-spacing:0.101px">Version 6.8.2</span></span>
  </div>
</div>
<div class="red" style="left:5px;top:42px;width:130px;height:39px"></div>
<div class="red" style="left:1px;top:707px;width:147px;height:48px"></div>
<div class="red" style="left:4px;top:866px;width:92px;height:27px"></div>
<div class="red" style="left:326px;top:154px;width:237px;height:47px"></div>
<div class="red" style="left:481px;top:290px;width:628px;height:643px"></div>
<div id="vline"></div><div id="wline"></div><div id="greenline"></div>
</body>
</html>
